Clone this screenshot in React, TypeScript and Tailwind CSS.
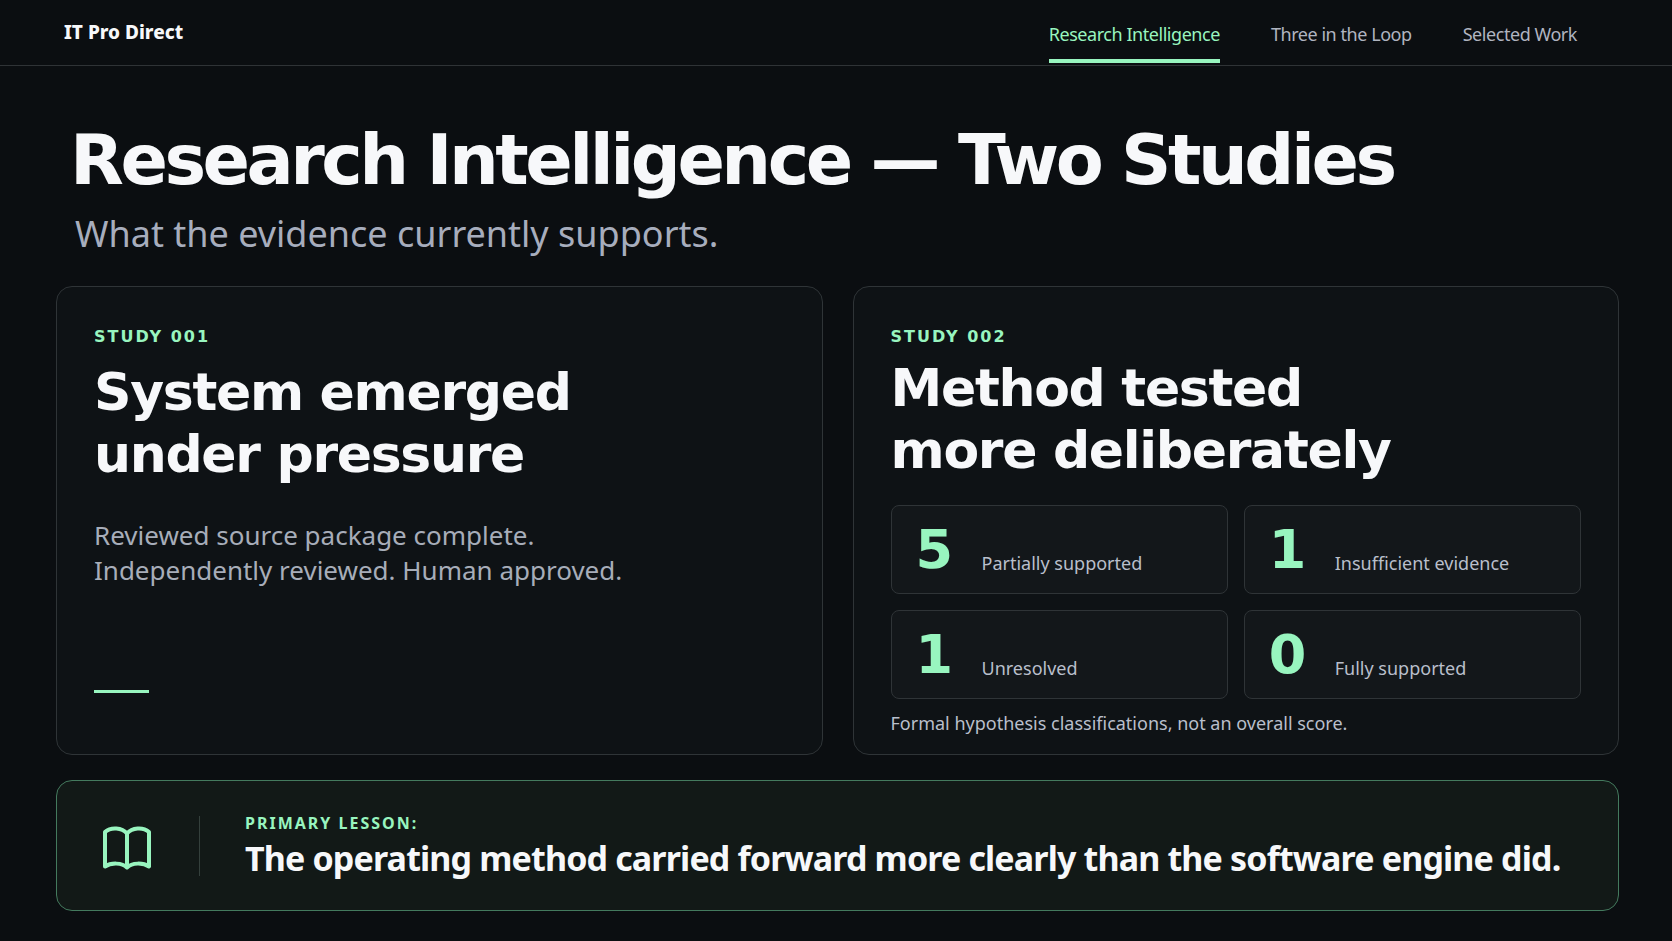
import React from "react";

interface StatProps {
  value: string;
  label: string;
}

const stats: StatProps[] = [
  { value: "5", label: "Partially supported" },
  { value: "1", label: "Insufficient evidence" },
  { value: "1", label: "Unresolved" },
  { value: "0", label: "Fully supported" },
];

function Stat({ value, label }: StatProps) {
  return (
    <div className="flex h-[89px] items-center rounded-lg border border-[#2f3437] bg-[#13171a] pl-6">
      <dd className="order-1 w-[66px] font-['DejaVu_Sans',sans-serif] text-[54px] leading-[56px] font-bold text-[#98f5bf]">{value}</dd>
      <dt className="order-2 mt-[26px] text-[18px] leading-6 text-[#b9bfcb]">{label}</dt>
    </div>
  );
}

function BookIcon() {
  return (
    <svg className="mt-1 h-[46px] w-[50px] text-[#98f5bf]" viewBox="0 0 50 46" fill="none" stroke="currentColor" strokeWidth="4" strokeLinejoin="round">
      <path d="M25 8.5C20 2.5 9 1.5 3 7v34.5c6-4 17-4 22 1 5-5 16-5 22-1V7C41 1.500 30 2.500 25 8.5Z" />
      <path d="M25 8.5v34" />
    </svg>
  );
}

export default function App() {
  return (
    <div className="min-h-screen bg-[#0b0e11] pb-[28px] font-['Noto_Sans',sans-serif] text-[#f7f8fa]">
      <header className="flex h-[66px] items-center justify-between border-b border-[#2f3336] pr-[95px] pl-16">
        <a href="#" className="text-[19px] font-extrabold">IT Pro Direct</a>
        <nav className="flex h-full gap-[51px] text-[18px] leading-6 tracking-tight text-[#b0b4c0]">
          <a href="#research" className="mb-[2px] border-b-4 border-[#98f5bf] pt-[22px] text-[#98f5bf]">Research Intelligence</a>
          <a href="#loop" className="pt-[22px]">Three in the Loop</a>
          <a href="#work" className="pt-[22px]">Selected Work</a>
        </nav>
      </header>
      <main className="pr-[53px] pl-14">
        <div className="pt-[50px] pl-[14px]">
          <h1 className="font-['DejaVu_Sans',sans-serif] text-[70px] leading-[88px] font-bold tracking-tighter">Research Intelligence — Two Studies</h1>
          <p className="mt-[6px] pl-[5px] text-[36px] leading-[48px] text-[#a7adbd]">What the evidence currently supports.</p>
        </div>
        <div className="mt-7 grid grid-cols-2 gap-[30px]">
          <section className="rounded-2xl border border-[#2f3437] bg-[#0e1215] px-[37px] pt-[38px]">
            <p className="font-['DejaVu_Sans',sans-serif] text-[16px] leading-6 font-bold tracking-[2px] text-[#98f5bf]">STUDY 001</p>
            <h2 className="mt-3 font-['DejaVu_Sans',sans-serif] text-[52px] leading-[62px] font-bold tracking-tight">System emerged<br />under pressure</h2>
            <p className="mt-[33px] text-[26px] leading-[35px] text-[#a7adb9]">Reviewed source package complete.<br />Independently reviewed. Human approved.</p>
            <div className="mt-[102px] h-[3px] w-[55px] bg-[#98f5bf]" />
          </section>
          <section className="rounded-2xl border border-[#2f3437] bg-[#0e1215] px-[37px] pt-[38px] pb-[19px]">
            <p className="font-['DejaVu_Sans',sans-serif] text-[16px] leading-6 font-bold tracking-[2px] text-[#98f5bf]">STUDY 002</p>
            <h2 className="mt-2 font-['DejaVu_Sans',sans-serif] text-[52px] leading-[62px] font-bold tracking-tight">Method tested<br />more deliberately</h2>
            <dl className="mt-6 grid grid-cols-2 gap-4">
              {stats.map((s) => (
                <Stat key={s.label} {...s} />
              ))}
            </dl>
            <p className="mt-3 text-[18px] leading-6 text-[#b9bfcb]">Formal hypothesis classifications, not an overall score.</p>
          </section>
        </div>
        <section className="mt-[25px] flex h-[131px] items-center rounded-2xl border border-[#447a5e] bg-[#121917] pl-[45px]">
          <BookIcon />
          <div className="ml-[47px] h-[60px] w-px bg-[#34403c]" />
          <div className="ml-[45px] pt-[2px]">
            <p className="text-[16px] leading-5 font-bold tracking-[2px] text-[#98f5bf]">PRIMARY LESSON:</p>
            <p className="mt-[2px] text-[34px] leading-[46px] font-bold tracking-tight">The operating method carried forward more clearly than the software engine did.</p>
          </div>
        </section>
      </main>
    </div>
  );
}
